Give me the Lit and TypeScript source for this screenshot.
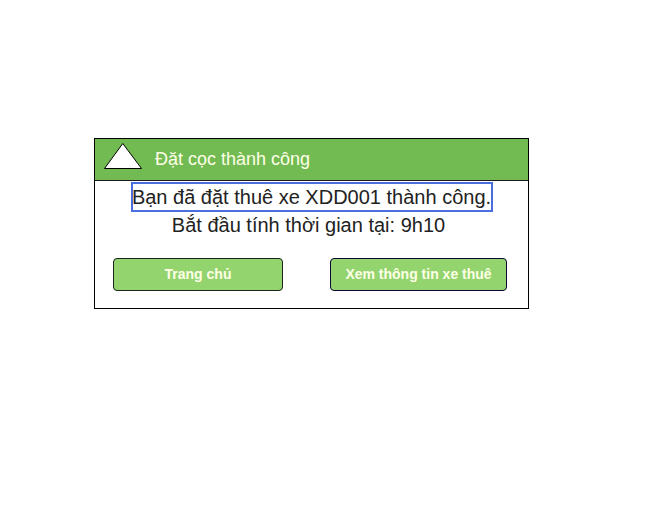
import { LitElement, html, css } from "lit";
import { customElement } from "lit/decorators.js";

@customElement("app-root")
export class AppRoot extends LitElement {
  static styles = css`
    :host {
      display: block;
      box-sizing: border-box;
      min-height: 507px;
      padding: 138px 0 0 94px;
      background: #fff;
      font-family: "Liberation Sans", Arial, sans-serif;
    }
    .dialog {
      box-sizing: border-box;
      width: 435px;
      height: 171px;
      border: 1px solid #000;
      background: #fff;
    }
    .header {
      box-sizing: border-box;
      display: flex;
      height: 42px;
      padding-left: 9px;
      border-bottom: 1px solid #1a1a1a;
      background: #72bb53;
      color: #ffffe6;
    }
    .logo {
      width: 40px;
      height: 30px;
      margin-top: 3px;
    }
    .title {
      margin-left: 11px;
      font-size: 18px;
      line-height: 40px;
      white-space: nowrap;
    }
    .message {
      display: flex;
      flex-direction: column;
      align-items: center;
      padding-top: 1px;
      font-size: 20px;
      color: #222;
      white-space: nowrap;
    }
    .selected {
      box-sizing: border-box;
      width: 362px;
      height: 30px;
      border: 2px solid #4a6fdc;
      line-height: 27px;
      text-indent: -0.6px;
    }
    .line {
      padding-right: 6px;
      line-height: 26px;
    }
    .actions {
      display: flex;
      gap: 47px;
      padding: 20px 0 0 18px;
    }
    .button {
      box-sizing: border-box;
      width: 170px;
      height: 33px;
      padding: 0;
      border: 1px solid #1a241a;
      border-radius: 4px;
      background: #93d46f;
      color: #ffffe6;
      font: bold 14px/31px "Liberation Sans", Arial, sans-serif;
      white-space: nowrap;
    }
    .wide {
      width: 177px;
      border-color: #0d0638;
    }
  `;

  render() {
    return html`
      <div class="dialog">
        <div class="header">
          <svg class="logo" viewBox="0 0 40 30">
            <path d="M0.5 26.5 L18.8 1.5 L37.5 26.5 Z" fill="#fff" stroke="#000" />
          </svg>
          <div class="title">Đặt cọc thành công</div>
        </div>
        <div class="message">
          <div class="selected">Bạn đã đặt thuê xe XDD001 thành công.</div>
          <div class="line">Bắt đầu tính thời gian tại: 9h10</div>
        </div>
        <div class="actions">
          <button class="button">Trang chủ</button>
          <button class="button wide">Xem thông tin xe thuê</button>
        </div>
      </div>
    `;
  }
}
